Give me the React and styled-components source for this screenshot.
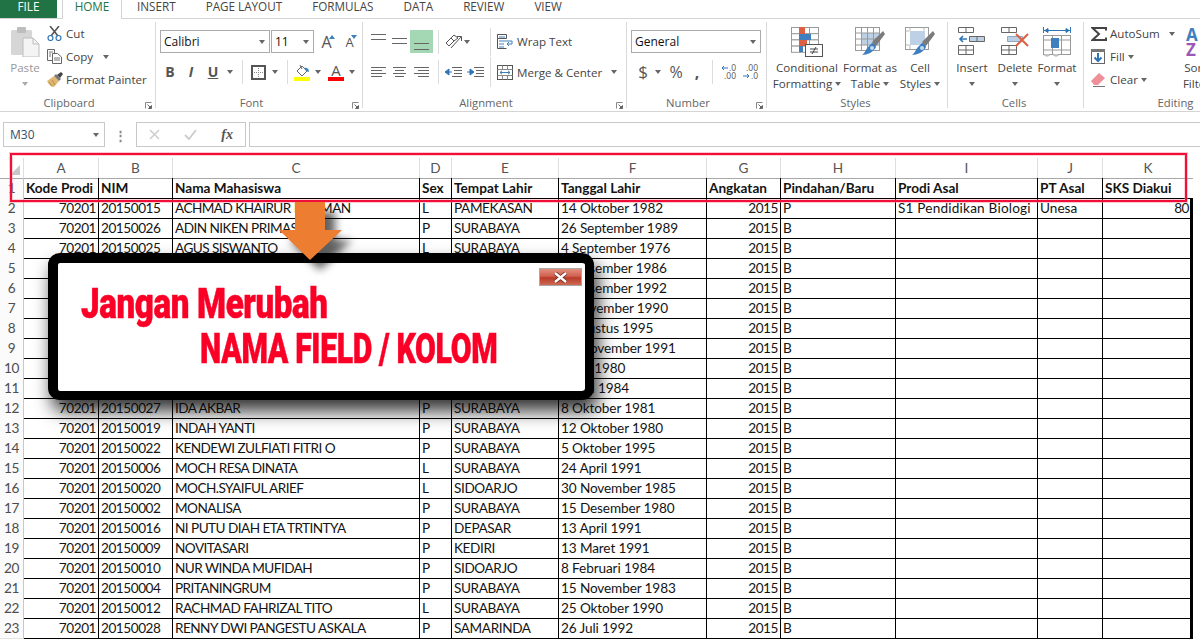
import styled, { createGlobalStyle } from 'styled-components';

const GlobalStyle = createGlobalStyle`
  html, body { margin: 0; padding: 0; background: #fff; overflow: hidden; }
  #root { height: 639px; }
`;

const uiFont = `"Open Sans", "Liberation Sans", sans-serif`;
const cellFont = `Lato, "Liberation Sans", sans-serif`;

const Page = styled.div`
  position: relative;
  width: 1200px;
  height: 639px;
  overflow: hidden;
  background: #fff;
  font-family: ${uiFont};
  color: #444;
`;

/* ---------- tabs ---------- */
const Tabs = styled.div`
  display: flex;
  height: 19px;
  box-sizing: border-box;
  border-bottom: 1px solid #d4d4d4;
  font-size: 11.7px;
  line-height: 13px;
`;
const FileTab = styled.div`
  width: 57px;
  height: 18px;
  margin-right: 5px;
  background: #217346;
  color: #fff;
  text-align: center;
`;
const HomeTab = styled.div`
  width: 60px;
  height: 19px;
  box-sizing: border-box;
  background: #fff;
  border: 1px solid #d4d4d4;
  border-width: 0 1px;
  color: #217346;
  text-align: center;
`;
const Tab = styled.div`
  padding: 0 15px;
`;

/* ---------- ribbon ---------- */
const Ribbon = styled.div`
  display: flex;
  height: 93px;
  box-sizing: border-box;
  padding-top: 3px;
  border-bottom: 1px solid #d4d4d4;
  overflow: hidden;
  font-size: 11.6px;
`;
const Group = styled.section`
  flex: none;
  width: ${(p) => p.$w}px;
  height: 86px;
  box-sizing: border-box;
  display: flex;
  flex-direction: column;
  border-right: ${(p) => (p.$last ? 'none' : '1px solid #d9d9d9')};
`;
const GroupBody = styled.div`
  flex: none;
  height: 75px;
  padding-left: ${(p) => p.$pad || 0}px;
  display: flex;
  flex-direction: ${(p) => (p.$col ? 'column' : 'row')};
`;
const GroupFoot = styled.div`
  display: grid;
  grid-template-columns: 1fr auto 1fr;
  align-items: center;
  height: 12px;
  line-height: 12px;
  padding-right: 3px;
  color: #666;
  font-size: 11.3px;
`;
const FootLabel = styled.span`
  grid-column: 2;
  transform: translateX(${(p) => p.$shift || 0}px);
`;
const Launcher = styled.svg`
  grid-column: 3;
  justify-self: end;
  margin-top: 4px;
`;
const ToolRow = styled.div`
  display: flex;
  align-items: center;
  height: ${(p) => p.$h || 24}px;
  margin-top: ${(p) => p.$top || 0}px;
`;
const Slot = styled.div`
  flex: none;
  width: ${(p) => p.$w}px;
  display: flex;
  justify-content: center;
  align-items: center;
  ${(p) => p.$active && 'height: 23px; background: #a4d7b4;'}
`;
const Caret = styled.i`
  display: inline-block;
  flex: none;
  width: 0;
  height: 0;
  border: 3.5px solid transparent;
  border-top: 4px solid ${(p) => (p.$light ? '#aaa' : '#666')};
  border-bottom: 0;
  margin-left: ${(p) => p.$ml || 0}px;
`;
const VBar = styled.div`
  width: 1px;
  height: ${(p) => p.$h || 24}px;
  flex: none;
  background: #dcdcdc;
`;
const Select = styled.div`
  flex: none;
  width: ${(p) => p.$w}px;
  height: 23px;
  box-sizing: border-box;
  border: 1px solid #ababab;
  margin-left: ${(p) => p.$ml || 0}px;
  padding: 0 4px 0 3px;
  display: flex;
  align-items: center;
  justify-content: space-between;
  color: #111;
  font-size: 12px;
`;
const BigCol = styled.div`
  flex: none;
  width: ${(p) => p.$w}px;
  display: flex;
  flex-direction: column;
  align-items: center;
  color: ${(p) => (p.$off ? '#9a9a9a' : '#444')};
  white-space: nowrap;
`;
const BigIcon = styled.div`
  height: 38px;
  padding-top: 5px;
  box-sizing: border-box;
`;
const BigLine = styled.div`
  height: 16px;
  line-height: 16px;
  display: flex;
  align-items: center;
`;
const SmallCol = styled.div`
  flex: none;
  width: ${(p) => (p.$w ? `${p.$w}px` : 'auto')};
  margin-left: ${(p) => p.$ml || 0}px;
  display: flex;
  flex-direction: column;
`;
const SmallRow = styled.div`
  height: 23px;
  display: flex;
  align-items: center;
  white-space: nowrap;
`;
const SmallIcon = styled.div`
  width: ${(p) => p.$w || 19}px;
  flex: none;
  display: flex;
  align-items: center;
`;
const SlotLabel = styled.span`
  margin-left: 1px;
  white-space: nowrap;
`;
const Fmt = styled.span`
  font-family: ${(p) => (p.$serif ? '"Liberation Serif", serif' : uiFont)};
  font-weight: ${(p) => (p.$bold ? 700 : 400)};
  font-style: ${(p) => (p.$italic ? 'italic' : 'normal')};
  text-decoration: ${(p) => (p.$under ? 'underline' : 'none')};
  font-size: ${(p) => p.$size || 14}px;
  line-height: ${(p) => p.$lh || 18}px;
  color: #555;
`;
const GrowBox = styled.div`
  display: flex;
  align-items: flex-start;
  height: 18px;
  & > svg { margin: 2px 0 0 -3px; }
`;
const ColorStack = styled.div`
  display: flex;
  flex-direction: column;
  align-items: center;
  width: 16px;
`;
const ColorBar = styled.div`
  width: 16px;
  height: 4px;
  background: #f00;
`;
const DecimalBox = styled.div`
  display: flex;
  flex-direction: column;
  align-items: flex-end;
  width: 16px;
  font-size: 8.5px;
  line-height: 8px;
  color: #555;
`;
const DecimalLine = styled.div`
  display: flex;
  align-items: center;
  gap: 1px;
`;
const SortStack = styled.div`
  display: flex;
  flex-direction: column;
  align-items: flex-start;
  width: 30px;
  font-size: 17px;
  font-weight: 700;
  line-height: 15px;
`;
const SortLetter = styled.span`
  color: ${(p) => p.$color};
`;

/* ---------- formula bar ---------- */
const FormulaBar = styled.div`
  display: flex;
  align-items: stretch;
  height: 46px;
  box-sizing: border-box;
  padding: 10px 0 11px 3px;
`;
const NameBox = styled.div`
  width: 102px;
  box-sizing: border-box;
  border: 1px solid #c9c9c9;
  padding: 0 5px 0 6px;
  display: flex;
  align-items: center;
  justify-content: space-between;
  font-size: 12px;
  color: #33506b;
`;
const Dots = styled.div`
  width: 31px;
  display: flex;
  align-items: center;
  justify-content: center;
  color: #8a8a8a;
  font-size: 13px;
  font-weight: 700;
`;
const FxBox = styled.div`
  width: 110px;
  box-sizing: border-box;
  border: 1px solid #c9c9c9;
  margin-right: 3px;
  display: flex;
  align-items: center;
  justify-content: space-around;
`;
const FormulaInput = styled.div`
  flex: 1;
  border: 1px solid #c9c9c9;
  border-right: 0;
`;

/* ---------- sheet ---------- */
const columns = '24px 75px 74px 247px 32px 107px 148px 74px 115px 142px 65px 90px';

const Sheet = styled.div`
  font-family: ${cellFont};
  font-size: 13.6px;
  color: #141414;
`;
const Row = styled.div`
  display: grid;
  grid-template-columns: ${columns};
  height: 20px;
`;
const ColHead = styled.div`
  box-sizing: border-box;
  border-right: 1px solid #dedede;
  border-bottom: 1px solid #a8a8a8;
  text-align: center;
  line-height: 20px;
  color: #555;
  ${(p) => p.$end && 'border-right: 0;'}
`;
const Corner = styled(ColHead)`
  position: relative;
  &::after {
    content: '';
    position: absolute;
    right: 3px;
    bottom: 3px;
    border: 5px solid #c8c8c8;
    border-top-color: transparent;
    border-left-color: transparent;
  }
`;
const RowHead = styled.div`
  box-sizing: border-box;
  border-right: 1px solid #c8c8c8;
  border-bottom: 1px solid #e3e3e3;
  background: #fbfbfb;
  text-align: center;
  line-height: 20px;
  letter-spacing: -0.3px;
  color: #4d4d4d;
`;
const Cell = styled.div`
  box-sizing: border-box;
  border-right: 1px solid #000;
  border-bottom: 1px solid #000;
  padding: 0 2px;
  line-height: 20px;
  white-space: nowrap;
  overflow: hidden;
  letter-spacing: ${(p) => p.$ls || 0}px;
  text-align: ${(p) => (p.$num ? 'right' : 'left')};
  font-weight: ${(p) => (p.$head ? 700 : 400)};
  ${(p) => p.$tail && 'border-right-width: 3px; padding-right: 1px;'}
  ${(p) => p.$noEdge && 'border-right: 0;'}
`;

/* ---------- things lying on top of the sheet ---------- */
const RedFrame = styled.div`
  position: absolute;
  left: 10px;
  top: 153px;
  width: 1177px;
  height: 49px;
  box-sizing: border-box;
  border: 2px solid #ef0f38;
  box-shadow: 0 0 0 1px rgba(255, 130, 150, 0.45), inset 0 0 0 1px rgba(255, 130, 150, 0.35);
`;
const DownArrow = styled.svg`
  position: absolute;
  left: 278px;
  top: 202px;
  z-index: 3;
  filter: drop-shadow(10px 10px 4px rgba(0, 0, 0, 0.62));
`;
const Dialog = styled.div`
  position: absolute;
  z-index: 2;
  left: 48px;
  top: 253px;
  width: 546px;
  height: 147px;
  box-sizing: border-box;
  background: #fff;
  border: solid #000;
  border-width: 10px 9px 9px 10px;
  border-radius: 12px;
  box-shadow: 4px 11px 18px rgba(0, 0, 0, 0.8);
  background-clip: padding-box;
  color: #fb0027;
  font-family: Roboto, "Liberation Sans", sans-serif;
  font-weight: 900;
  font-size: 42px;
  line-height: 45px;
  padding-top: 18px;
`;
const Warning = styled.div`
  width: max-content;
  margin-left: ${(p) => p.$ml}px;
  transform: scaleX(${(p) => p.$sx});
  transform-origin: left center;
  letter-spacing: -0.5px;
  -webkit-text-stroke: 0.5px #fb0027;
`;
const CloseBtn = styled.div`
  position: absolute;
  right: 3px;
  top: 5px;
  width: 43px;
  height: 18px;
  box-sizing: border-box;
  border: 1px solid #a9a9a9;
  background: linear-gradient(#e38f80 0, #d0604f 45%, #b93a28 55%, #cf6a54 100%);
  display: flex;
  align-items: center;
  justify-content: center;
`;

/* ---------- drawn icons ---------- */
const Svg = ({ w, h, children }) => (
  <svg width={w} height={h} viewBox={`0 0 ${w} ${h}`} style={{ display: 'block' }}>{children}</svg>
);

const PasteIcon = () => (
  <Svg w={29} h={30}>
    <rect x="0" y="3" width="21" height="25" rx="1.5" fill="#d6d6d6" />
    <rect x="6" y="0" width="9" height="6" rx="1" fill="#bdbdbd" />
    <path d="M12 11h10l6 6v13H12z" fill="#f4f4f4" stroke="#bdbdbd" />
    <path d="M22 11v6h6" fill="none" stroke="#bdbdbd" />
  </Svg>
);
const CutIcon = () => (
  <Svg w={15} h={15}>
    <path d="M3 0l8 10M12 0L4 10" stroke="#555" strokeWidth="1.6" />
    <circle cx="3.5" cy="12" r="2.5" fill="none" stroke="#2f75b5" strokeWidth="1.2" />
    <circle cx="11.5" cy="12" r="2.5" fill="none" stroke="#2f75b5" strokeWidth="1.2" />
  </Svg>
);
const CopyIcon = () => (
  <Svg w={15} h={15}>
    <path d="M.5.5h7v11h-7z" fill="#fff" stroke="#666" />
    <path d="M5.5 4.5h5l4 3.5v6.5h-9z" fill="#fff" stroke="#666" />
    <path d="M7 9h6M7 11h6M2 3h4M2 5h2M2 7h2" stroke="#777" />
  </Svg>
);
const BrushIcon = () => (
  <Svg w={16} h={15}>
    <path d="M0 9l7-5 5 5-5 6c-3 0-5-2-7-6z" fill="#e0b873" />
    <path d="M2 10l3 4M5 8l3 5" stroke="#b98c45" />
    <path d="M7 4l5 5 2-2-5-5z" fill="#777" />
    <path d="M10 3l4-3 2 2-3 4z" fill="#444" />
  </Svg>
);
const Launch = () => (
  <Launcher width="7" height="7" viewBox="0 0 7 7">
    <path d="M.5 6.5v-6h6" fill="none" stroke="#888" />
    <path d="M2.5 2.5l3 3M6.5 3.5v3h-3z" stroke="#666" fill="#666" />
  </Launcher>
);
const GrowFont = ({ up }) => (
  <GrowBox>
    <Fmt $size={up ? 16 : 13}>A</Fmt>
    <Svg w={6} h={4}>
      <path d={up ? 'M0 4l3-4 3 4z' : 'M0 0l3 4 3-4z'} fill="#3e7fba" />
    </Svg>
  </GrowBox>
);
const BorderIcon = () => (
  <Svg w={15} h={15}>
    <rect x="1" y="1" width="13" height="13" fill="none" stroke="#555" strokeWidth="2" />
    <path d="M7.5 3v9M3 7.5h9" stroke="#888" strokeDasharray="1 1" />
  </Svg>
);
const FillIcon = () => (
  <Svg w={17} h={17}>
    <path d="M3 7l5-5 5 5-5 5z" fill="#fff" stroke="#666" />
    <path d="M6 1l2 4" stroke="#666" />
    <path d="M10 4c3-1 5 1 5 4l-3-1z" fill="#3e7fba" />
    <rect x="0" y="13" width="16" height="4" fill="#ffff00" />
  </Svg>
);
const ColorIcon = () => (
  <ColorStack>
    <Fmt $size={15} $lh={13}>A</Fmt>
    <ColorBar />
  </ColorStack>
);
const Lines = ({ rows, w = 15, h = 18 }) => (
  <Svg w={w} h={h}>
    {rows.map(([a, b, y]) => <path key={y} d={`M${a} ${y + 0.5}H${b}`} stroke="#666" />)}
  </Svg>
);
const OrientIcon = () => (
  <Svg w={18} h={15}>
    <path d="M1 9l5-5 3 3-5 5zM6 4l3-3 4 3-4 3" fill="none" stroke="#555" />
    <path d="M6 14L16 3M12 2.5h4.5V7" fill="none" stroke="#555" />
  </Svg>
);
const WrapIcon = () => (
  <Svg w={16} h={15}>
    <path d="M.5.5h9v4h-9zM.5 4.5v10h9" fill="none" stroke="#555" />
    <path d="M2 3h6" stroke="#3e7fba" />
    <path d="M2 7h9M2 10h5M2 13h5" stroke="#3e7fba" />
    <path d="M11 7h4v3h-5M12 8l-2 2 2 2" fill="none" stroke="#3e7fba" />
  </Svg>
);
const MergeIcon = () => (
  <Svg w={16} h={15}>
    <rect x=".5" y=".5" width="15" height="14" fill="none" stroke="#555" />
    <path d="M.5 4.5h15M.5 10.5h15M5.5.5v4M10.5.5v4M5.5 10.5v4M10.5 10.5v4" stroke="#888" />
    <path d="M3 7.5h10M5 5.8L3 7.5l2 1.7M11 5.8l2 1.7-2 1.7" fill="none" stroke="#3e7fba" />
  </Svg>
);
const IndentIcon = ({ flip }) => (
  <Svg w={17} h={12}>
    <path d="M7 1.5h10M9 4.5h8M9 7.5h8M7 10.5h10" stroke="#666" />
    {flip
      ? <path d="M0 6h5M3 3l4 3-4 3z" stroke="#2f75b5" fill="#2f75b5" />
      : <path d="M7 6H2M4 3L0 6l4 3z" stroke="#2f75b5" fill="#2f75b5" />}
  </Svg>
);
const SmallArrow = ({ left }) => (
  <Svg w={7} h={6}>
    <path d={left ? 'M7 3H1M3 1L1 3l2 2' : 'M0 3h6M4 1l2 2-2 2'} fill="none" stroke="#2f75b5" />
  </Svg>
);
const DecimalIcon = ({ more }) => (
  <DecimalBox>
    {more
      ? <DecimalLine><SmallArrow left />.0</DecimalLine>
      : <DecimalLine>.00</DecimalLine>}
    {more
      ? <DecimalLine>.00</DecimalLine>
      : <DecimalLine><SmallArrow />.0</DecimalLine>}
  </DecimalBox>
);
const CondIcon = () => (
  <Svg w={33} h={30}>
    <g stroke="#9a9a9a" fill="#fff">
      {[0, 1, 2].map((c) => [0, 1, 2, 3].map((r) => (
        <rect key={`${c}${r}`} x={c * 9 + 0.5} y={r * 6.2 + 0.5} width="9" height="6.2" />
      )))}
    </g>
    <rect x="8" y="0" width="6" height="7" fill="#dd6043" />
    <rect x="8" y="7" width="12" height="6" fill="#3f7fbf" />
    <rect x="8" y="13" width="8" height="6" fill="#dd6043" />
    <rect x="8" y="19" width="4" height="6" fill="#3f7fbf" />
    <rect x="14.5" y="17.5" width="17" height="12" fill="#fff" stroke="#555" />
    <path d="M19 22h8M19 25h8M25 20l-4 7" stroke="#444" fill="none" />
  </Svg>
);
const TableBrushIcon = ({ plain }) => (
  <Svg w={30} h={29}>
    {plain ? (
      <>
        <rect x=".5" y=".5" width="23" height="22" fill="#fff" stroke="#9a9a9a" />
        <rect x="5" y="4" width="15" height="14" fill="#bdd0e6" />
        <path d="M5 .5v3M19 .5v3M.5 4h4M.5 18h4M5 18v4M19 18v4" stroke="#b5b5b5" />
      </>
    ) : (
      <>
        <rect x="6" y="6" width="18" height="12" fill="#bdd0e6" />
        <g stroke="#9a9a9a" fill="none">
          <rect x=".5" y=".5" width="24" height="23" />
          <path d="M.5 6h24M.5 12h24M.5 18h24M6.5.5v23M12.5.5v23M18.5.5v23" />
        </g>
      </>
    )}
    <path d="M13 20l4-4c2 0 4 2 4 4-2 5-9 8-14 8 3-2 4-6 6-8z" fill="#3f7fbf" />
    <path d="M17 15L28 4l2 3-9 12z" fill="#7b7b7b" />
    <circle cx="17" cy="21" r="2" fill="#fff" opacity=".7" />
  </Svg>
);
const InsertIcon = ({ del }) => (
  <Svg w={28} h={29}>
    <path d="M.5.5h15v5H.5zM8 .5v5" fill="none" stroke="#666" />
    {del
      ? <path d="M6.5 9.5h15v5h-15z" fill="#bdd0e6" stroke="#8fa9c4" />
      : <path d="M11.5 9.5h15v5h-15zM19 9.5v5" fill="#bdd0e6" stroke="#666" />}
    {!del && <path d="M9 12H2M5 9l-3 3 3 3" fill="none" stroke="#2f75b5" strokeWidth="1.6" />}
    <path d="M.5 18.5h15v9H.5zM8 18.5v9M.5 23h15" fill="none" stroke="#666" />
    {del && <path d="M15 7l12 12M27 7L15 19" stroke="#dd6043" strokeWidth="2" />}
  </Svg>
);
const FormatIcon = () => (
  <Svg w={28} h={30}>
    <path d="M.5 3.5h27M.5 0v6M27.5 0v6M2 3.5l3-2v4zM26 3.5l-3-2v4z" fill="#2f75b5" stroke="#2f75b5" />
    <g stroke="#999" fill="none">
      <rect x=".5" y="8.5" width="27" height="19" />
      <path d="M9.5 8.5v19M18.5 8.5v19M.5 13h27M.5 23h27" />
    </g>
    <rect x="8" y="11" width="8" height="10" fill="#3f7fbf" />
    <path d="M1 27.5c2 2 4 2 6 0M10 27.5c2 2 4 2 6 0" fill="#fff" stroke="#999" />
  </Svg>
);
const SigmaIcon = () => (
  <Svg w={16} h={14}>
    <path d="M15 3.5V1H1.5L8 7l-6.5 6H15v-2.5" fill="none" stroke="#444" strokeWidth="2" />
  </Svg>
);
const FillDownIcon = () => (
  <Svg w={14} h={15}>
    <rect x=".5" y=".5" width="13" height="14" fill="#fff" stroke="#666" />
    <rect x="0" y="0" width="14" height="3" fill="#777" />
    <path d="M7 4v8M3.5 8.5L7 12l3.5-3.5" fill="none" stroke="#2f75b5" strokeWidth="2" />
  </Svg>
);
const EraserIcon = () => (
  <Svg w={15} h={15}>
    <path d="M0 9l8-8 6 5-7 7H3z" fill="#ef8f9a" />
    <path d="M2 14.5h12" stroke="#777" />
  </Svg>
);
const SortIcon = () => (
  <SortStack>
    <SortLetter $color="#3f7fbf">A</SortLetter>
    <SortLetter $color="#9b59b6">Z</SortLetter>
  </SortStack>
);
const Cross = ({ color = '#cfcfcf' }) => (
  <Svg w={11} h={11}>
    <path d="M1 1l9 9M10 1l-9 9" stroke={color} strokeWidth="1.6" />
  </Svg>
);
const Tick = () => (
  <Svg w={13} h={11}>
    <path d="M1 6l4 4 7-9" fill="none" stroke="#cfcfcf" strokeWidth="2" />
  </Svg>
);

/* ---------- data ---------- */
const heads = ['Kode Prodi', 'NIM', 'Nama Mahasiswa', 'Sex', 'Tempat Lahir', 'Tanggal Lahir', 'Angkatan', 'Pindahan/Baru', 'Prodi Asal', 'PT Asal', 'SKS Diakui'];
const rows = [
  ['20150015', 'ACHMAD KHAIRUR RAHMAN', 'L', 'PAMEKASAN', '14 Oktober 1982', 'P', 'S1 Pendidikan Biologi', 'Unesa', '80'],
  ['20150026', 'ADIN NIKEN PRIMASARI', 'P', 'SURABAYA', '26 September 1989', 'B'],
  ['20150025', 'AGUS SISWANTO', 'L', 'SURABAYA', '4 September 1976', 'B'],
  ['', '', '', '', '7 Desember 1986', 'B'],
  ['', '', '', '', '3 Desember 1992', 'B'],
  ['', '', '', '', '9 November 1990', 'B'],
  ['', '', '', '', '9 Agustus 1995', 'B'],
  ['', '', '', '', '15 November 1991', 'B'],
  ['', '', '', '', '7 Juli 1980', 'B'],
  ['', '', '', '', '4 Mei 1984', 'B'],
  ['20150027', 'IDA AKBAR', 'P', 'SURABAYA', '8 Oktober 1981', 'B'],
  ['20150019', 'INDAH YANTI', 'P', 'SURABAYA', '12 Oktober 1980', 'B'],
  ['20150022', 'KENDEWI ZULFIATI FITRI O', 'P', 'SURABAYA', '5 Oktober 1995', 'B'],
  ['20150006', 'MOCH RESA DINATA', 'L', 'SURABAYA', '24 April 1991', 'B'],
  ['20150020', 'MOCH.SYAIFUL ARIEF', 'L', 'SIDOARJO', '30 November 1985', 'B'],
  ['20150002', 'MONALISA', 'P', 'SURABAYA', '15 Desember 1980', 'B'],
  ['20150016', 'NI PUTU DIAH ETA TRTINTYA', 'P', 'DEPASAR', '13 April 1991', 'B'],
  ['20150009', 'NOVITASARI', 'P', 'KEDIRI', '13 Maret 1991', 'B'],
  ['20150010', 'NUR WINDA MUFIDAH', 'P', 'SIDOARJO', '8 Februari 1984', 'B'],
  ['20150004', 'PRITANINGRUM', 'P', 'SURABAYA', '15 November 1983', 'B'],
  ['20150012', 'RACHMAD FAHRIZAL TITO', 'L', 'SURABAYA', '25 Oktober 1990', 'B'],
  ['20150028', 'RENNY DWI PANGESTU ASKALA', 'P', 'SAMARINDA', '26 Juli 1992', 'B'],
];

function BigButton({ w, icon, lines, caret, off }) {
  return (
    <BigCol $w={w} $off={off}>
      <BigIcon>{icon}</BigIcon>
      {lines.map((l, i) => (
        <BigLine key={i}>
          {l}
          {caret && i === lines.length - 1 && <Caret $ml={l ? 3 : 0} $light={off} />}
        </BigLine>
      ))}
    </BigCol>
  );
}

function TopRibbon() {
  return (
    <Ribbon>
      <Group $w={156}>
        <GroupBody $pad={10}>
          <BigButton w={30} off caret icon={<PasteIcon />} lines={['Paste', '']} />
          <SmallCol $ml={7}>
            <SmallRow><SmallIcon><CutIcon /></SmallIcon>Cut</SmallRow>
            <SmallRow><SmallIcon><CopyIcon /></SmallIcon>Copy<Caret $ml={10} /></SmallRow>
            <SmallRow><SmallIcon><BrushIcon /></SmallIcon>Format Painter</SmallRow>
          </SmallCol>
        </GroupBody>
        <GroupFoot><FootLabel $shift={-7}>Clipboard</FootLabel><Launch /></GroupFoot>
      </Group>

      <Group $w={207}>
        <GroupBody $pad={4} $col>
          <ToolRow $top={8} $h={23}>
            <Select $w={110}>Calibri<Caret /></Select>
            <Select $w={43} $ml={1}>11<Caret /></Select>
            <Slot $w={28}><GrowFont up /></Slot>
            <Slot $w={18}><GrowFont /></Slot>
          </ToolRow>
          <ToolRow $top={7}>
            <Slot $w={20}><Fmt $bold>B</Fmt></Slot>
            <Slot $w={22}><Fmt $italic $bold>I</Fmt></Slot>
            <Slot $w={22}><Fmt $under $bold>U</Fmt></Slot>
            <Slot $w={12}><Caret /></Slot>
            <Slot $w={12}><VBar /></Slot>
            <Slot $w={20}><BorderIcon /></Slot>
            <Slot $w={14}><Caret /></Slot>
            <Slot $w={10}><VBar /></Slot>
            <Slot $w={20}><FillIcon /></Slot>
            <Slot $w={12}><Caret /></Slot>
            <Slot $w={24}><ColorIcon /></Slot>
            <Slot $w={8}><Caret /></Slot>
          </ToolRow>
        </GroupBody>
        <GroupFoot><FootLabel $shift={-6}>Font</FootLabel><Launch /></GroupFoot>
      </Group>

      <Group $w={264}>
        <GroupBody $pad={5} $col>
          <ToolRow $top={8} $h={23}>
            <Slot $w={21}><Lines rows={[[0, 15, 1], [0, 15, 6]]} /></Slot>
            <Slot $w={21}><Lines rows={[[0, 15, 5], [0, 15, 10]]} /></Slot>
            <Slot $w={23} $active><Lines rows={[[0, 15, 10], [0, 15, 16]]} /></Slot>
            <Slot $w={10}><VBar /></Slot>
            <Slot $w={21}><OrientIcon /></Slot>
            <Slot $w={6}><Caret /></Slot>
            <Slot $w={16} />
            <Slot $w={8}><VBar $h={28} /></Slot>
            <Slot $w={22}><WrapIcon /></Slot>
            <SlotLabel>Wrap Text</SlotLabel>
          </ToolRow>
          <ToolRow $top={7}>
            <Slot $w={21}><Lines rows={[[0, 15, 4], [0, 11, 7], [0, 15, 10], [0, 11, 13]]} /></Slot>
            <Slot $w={21}><Lines w={13} rows={[[0, 13, 4], [2, 11, 7], [0, 13, 10], [2, 11, 13]]} /></Slot>
            <Slot $w={23}><Lines rows={[[0, 15, 4], [4, 15, 7], [0, 15, 10], [4, 15, 13]]} /></Slot>
            <Slot $w={10}><VBar /></Slot>
            <Slot $w={21}><IndentIcon /></Slot>
            <Slot $w={22}><IndentIcon flip /></Slot>
            <Slot $w={8}><VBar $h={30} /></Slot>
            <Slot $w={22}><MergeIcon /></Slot>
            <SlotLabel>Merge &amp; Center</SlotLabel>
            <Caret $ml={9} />
          </ToolRow>
        </GroupBody>
        <GroupFoot><FootLabel $shift={-7}>Alignment</FootLabel><Launch /></GroupFoot>
      </Group>

      <Group $w={140}>
        <GroupBody $pad={4} $col>
          <ToolRow $top={8} $h={23}>
            <Select $w={130}>General<Caret /></Select>
          </ToolRow>
          <ToolRow $top={7}>
            <Slot $w={24}><Fmt $size={17}>$</Fmt></Slot>
            <Slot $w={6}><Caret /></Slot>
            <Slot $w={30}><Fmt $size={16}>%</Fmt></Slot>
            <Slot $w={12}><Fmt $size={16} $bold>,</Fmt></Slot>
            <Slot $w={18}><VBar /></Slot>
            <Slot $w={15}><DecimalIcon more /></Slot>
            <Slot $w={7} />
            <Slot $w={15}><DecimalIcon /></Slot>
          </ToolRow>
        </GroupBody>
        <GroupFoot><FootLabel $shift={-7}>Number</FootLabel><Launch /></GroupFoot>
      </Group>

      <Group $w={181}>
        <GroupBody $pad={5}>
          <BigButton w={70} caret icon={<CondIcon />} lines={['Conditional', 'Formatting']} />
          <BigButton w={56} caret icon={<TableBrushIcon />} lines={['Format as', 'Table']} />
          <BigButton w={44} caret icon={<TableBrushIcon plain />} lines={['Cell', 'Styles']} />
        </GroupBody>
        <GroupFoot><FootLabel>Styles</FootLabel></GroupFoot>
      </Group>

      <Group $w={136}>
        <GroupBody $pad={2}>
          <BigButton w={44} caret icon={<InsertIcon />} lines={['Insert', '']} />
          <BigButton w={42} caret icon={<InsertIcon del />} lines={['Delete', '']} />
          <BigButton w={42} caret icon={<FormatIcon />} lines={['Format', '']} />
        </GroupBody>
        <GroupFoot><FootLabel>Cells</FootLabel></GroupFoot>
      </Group>

      <Group $w={140} $last>
        <GroupBody $pad={7}>
          <SmallCol $w={92}>
            <SmallRow><SmallIcon><SigmaIcon /></SmallIcon>AutoSum<Caret $ml={9} /></SmallRow>
            <SmallRow><SmallIcon><FillDownIcon /></SmallIcon>Fill<Caret $ml={3} /></SmallRow>
            <SmallRow><SmallIcon><EraserIcon /></SmallIcon>Clear<Caret $ml={3} /></SmallRow>
          </SmallCol>
          <BigButton w={36} caret icon={<SortIcon />} lines={['Sort &', 'Filter']} />
        </GroupBody>
        <GroupFoot><FootLabel $shift={23}>Editing</FootLabel></GroupFoot>
      </Group>
    </Ribbon>
  );
}

function DataRow({ n, r }) {
  const [nim, name, sex, place, date, kind, asal = '', pt = '', sks = ''] = r;
  return (
    <Row>
      <RowHead>{n}</RowHead>
      <Cell $num $ls={-0.45}>{nim && '70201'}</Cell>
      <Cell $ls={-0.45}>{nim}</Cell>
      <Cell $ls={-0.55}>{name}</Cell>
      <Cell>{sex}</Cell>
      <Cell $ls={-0.4}>{place}</Cell>
      <Cell $ls={-0.12}>{date}</Cell>
      <Cell $num $ls={-0.45}>2015</Cell>
      <Cell>{kind}</Cell>
      <Cell $ls={0.2}>{asal}</Cell>
      <Cell>{pt}</Cell>
      <Cell $num $tail $ls={-0.45}>{sks}</Cell>
    </Row>
  );
}

export default function App() {
  return (
    <Page>
      <GlobalStyle />
      <Tabs>
        <FileTab>FILE</FileTab>
        <HomeTab>HOME</HomeTab>
        {['INSERT', 'PAGE LAYOUT', 'FORMULAS', 'DATA', 'REVIEW', 'VIEW'].map((t) => <Tab key={t}>{t}</Tab>)}
      </Tabs>
      <TopRibbon />
      <FormulaBar>
        <NameBox>M30<Caret /></NameBox>
        <Dots>⋮</Dots>
        <FxBox>
          <Cross />
          <Tick />
          <Fmt $serif $italic $bold $size={14}>fx</Fmt>
        </FxBox>
        <FormulaInput />
      </FormulaBar>
      <Sheet>
        <Row>
          <Corner />
          {'ABCDEFGHIJK'.split('').map((c) => <ColHead key={c} $end={c === 'K'}>{c}</ColHead>)}
        </Row>
        <Row>
          <RowHead>1</RowHead>
          {heads.map((h, i) => <Cell key={h} $head $noEdge={i === 10}>{h}</Cell>)}
        </Row>
        {rows.map((r, i) => <DataRow key={i} n={i + 2} r={r} />)}
      </Sheet>

      <RedFrame />
      <Dialog>
        <CloseBtn>
          <svg width="15" height="11" viewBox="0 0 15 11">
            <path d="M2 1l11 9M13 1L2 10" stroke="#6b2a20" strokeWidth="4" />
            <path d="M2 1l11 9M13 1L2 10" stroke="#fff" strokeWidth="2.4" />
          </svg>
        </CloseBtn>
        <Warning $ml={23} $sx={0.79}>Jangan Merubah</Warning>
        <Warning $ml={142} $sx={0.72}>NAMA FIELD / KOLOM</Warning>
      </Dialog>
      <DownArrow width="64" height="60" viewBox="0 0 64 60">
        <path d="M17 0h30v28h17L32 58 1 28h16z" fill="#ed7d31" />
      </DownArrow>
    </Page>
  );
}
